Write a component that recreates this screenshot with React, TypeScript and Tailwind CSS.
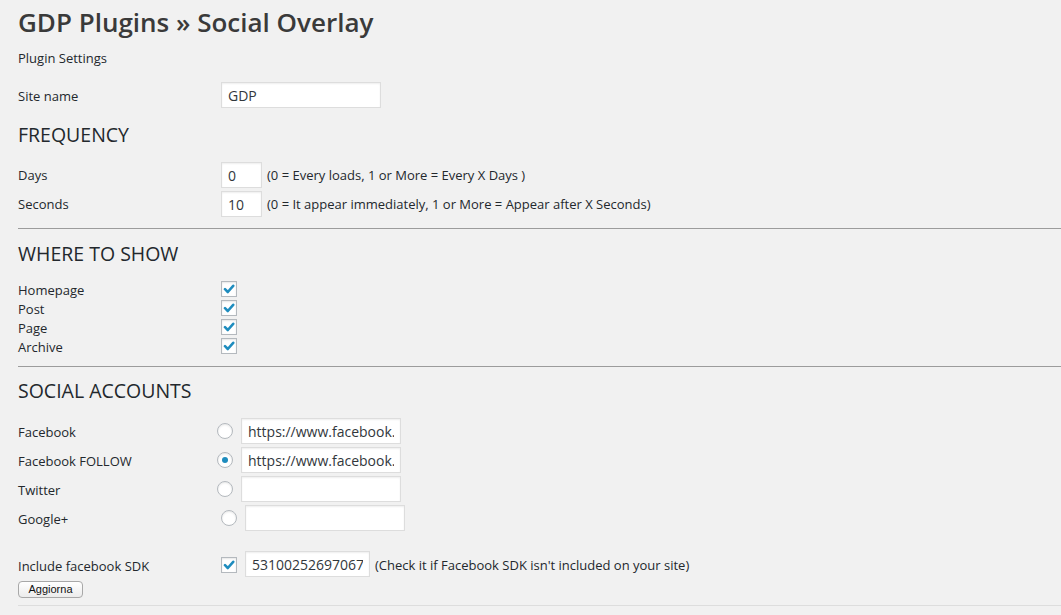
import React from 'react';

const labelCls = 'w-[203px] shrink-0 text-[13px] text-[#23282d]';
const inputCls =
  'h-[26px] bg-white border border-[#dddddd] shadow-[inset_0_1px_2px_rgba(0,0,0,0.07)] px-[6px] text-[14px] text-[#32373c] outline-none';

function Check({ checked = true }: { checked?: boolean }) {
  return (
    <span className="inline-flex w-[16px] h-[16px] items-center justify-center bg-white border border-[#b4b9be] shadow-[inset_0_1px_2px_rgba(0,0,0,0.1)]">
      {checked && (
        <svg width="12" height="12" viewBox="0 0 12 12">
          <path d="M2 6.2 L4.8 9 L10.2 2.8" fill="none" stroke="#1e8cbe" strokeWidth="2.6" strokeLinecap="round" strokeLinejoin="round" />
        </svg>
      )}
    </span>
  );
}

function Radio({ checked = false }: { checked?: boolean }) {
  return (
    <span className="inline-flex w-[16px] h-[16px] rounded-full items-center justify-center bg-white border border-[#b4b9be] shadow-[inset_0_1px_2px_rgba(0,0,0,0.1)]">
      {checked && <span className="w-[6px] h-[6px] rounded-full bg-[#1e8cbe]" />}
    </span>
  );
}

function Heading({ children }: { children: React.ReactNode }) {
  return <h3 className="h-[26px] leading-[26px] text-[19.5px] text-[#23282d]">{children}</h3>;
}

function Rule({ light = false }: { light?: boolean }) {
  return <div className={light ? 'h-px bg-[#dddddd]' : 'h-px bg-[#9c9c9c]'} />;
}

export default function App() {
  const where = ['Homepage', 'Post', 'Page', 'Archive'];
  const social = [
    { name: 'Facebook', value: 'https://www.facebook.com/gdp', checked: false, shift: false },
    { name: 'Facebook FOLLOW', value: 'https://www.facebook.com/gdp', checked: true, shift: false },
    { name: 'Twitter', value: '', checked: false, shift: false },
    { name: 'Google+', value: '', checked: false, shift: true },
  ];

  return (
    <div className="min-h-[615px] bg-[#f1f1f1] pl-[18px] font-['Open_Sans',sans-serif] text-[#23282d]">
      <h2 className="h-[44px] leading-[44px] text-[26px] font-semibold text-[#3a3a3a]">GDP Plugins » Social Overlay</h2>
      <div className="mt-[4px] h-[20px] leading-[20px] text-[13px]">Plugin Settings</div>

      <div className="mt-[14px] flex items-center h-[26px]">
        <span className={`${labelCls} pt-[4px]`}>Site name</span>
        <input className={`${inputCls} w-[160px]`} defaultValue="GDP" />
      </div>

      <div className="mt-[14px]">
        <Heading>FREQUENCY</Heading>
      </div>
      <div className="mt-[14px] flex flex-col gap-[3px]">
        <div className="flex items-center h-[26px]">
          <span className={`${labelCls} pt-[2px]`}>Days</span>
          <input className={`${inputCls} w-[41px]`} defaultValue="0" />
          <span className="ml-[5px] pt-[2px] text-[13px]">(0 = Every loads, 1 or More = Every X Days )</span>
        </div>
        <div className="flex items-center h-[26px]">
          <span className={`${labelCls} pt-[2px]`}>Seconds</span>
          <input className={`${inputCls} w-[41px]`} defaultValue="10" />
          <span className="ml-[5px] pt-[2px] text-[13px]">(0 = It appear immediately, 1 or More = Appear after X Seconds)</span>
        </div>
      </div>
      <div className="mt-[11px]">
        <Rule />
      </div>

      <div className="mt-[12px]">
        <Heading>WHERE TO SHOW</Heading>
      </div>
      <div className="mt-[13px] flex flex-col">
        {where.map((w) => (
          <div key={w} className="flex h-[19px]">
            <span className={`${labelCls} leading-[21px]`}>{w}</span>
            <span className="flex pt-px">
              <Check />
            </span>
          </div>
        ))}
      </div>
      <div className="mt-[10px]">
        <Rule />
      </div>

      <div className="mt-[11px]">
        <Heading>SOCIAL ACCOUNTS</Heading>
      </div>
      <div className="mt-[14px] flex flex-col gap-[3px]">
        {social.map((s) => (
          <div key={s.name} className="flex items-center h-[26px]">
            <span className="w-[199px] shrink-0 text-[13px] pt-[4px]">{s.name}</span>
            <span className={s.shift ? 'ml-[4px] flex' : 'flex'}>
              <Radio checked={s.checked} />
            </span>
            <input className={`${inputCls} w-[160px] ml-[8px]`} defaultValue={s.value} />
          </div>
        ))}
      </div>

      <div className="mt-[20px] flex items-center h-[26px]">
        <span className={`${labelCls} pt-[5px]`}>Include facebook SDK</span>
        <span className="flex pt-px">
          <Check />
        </span>
        <input className={`${inputCls} w-[125px] ml-[8px]`} defaultValue="5310025269706767" />
        <span className="ml-[5px] pt-[3px] text-[13px]">(Check it if Facebook SDK isn't included on your site)</span>
      </div>

      <div className="mt-[4px] flex h-[17px]">
        <button className="h-[17px] w-[65px] rounded-[4px] border border-[#a8a8a8] bg-gradient-to-b from-white to-[#ececec] text-[11px] leading-[15px] text-[#111] font-['Liberation_Sans',sans-serif]">
          Aggiorna
        </button>
      </div>
      <div className="mt-[7px]">
        <Rule light />
      </div>
    </div>
  );
}
